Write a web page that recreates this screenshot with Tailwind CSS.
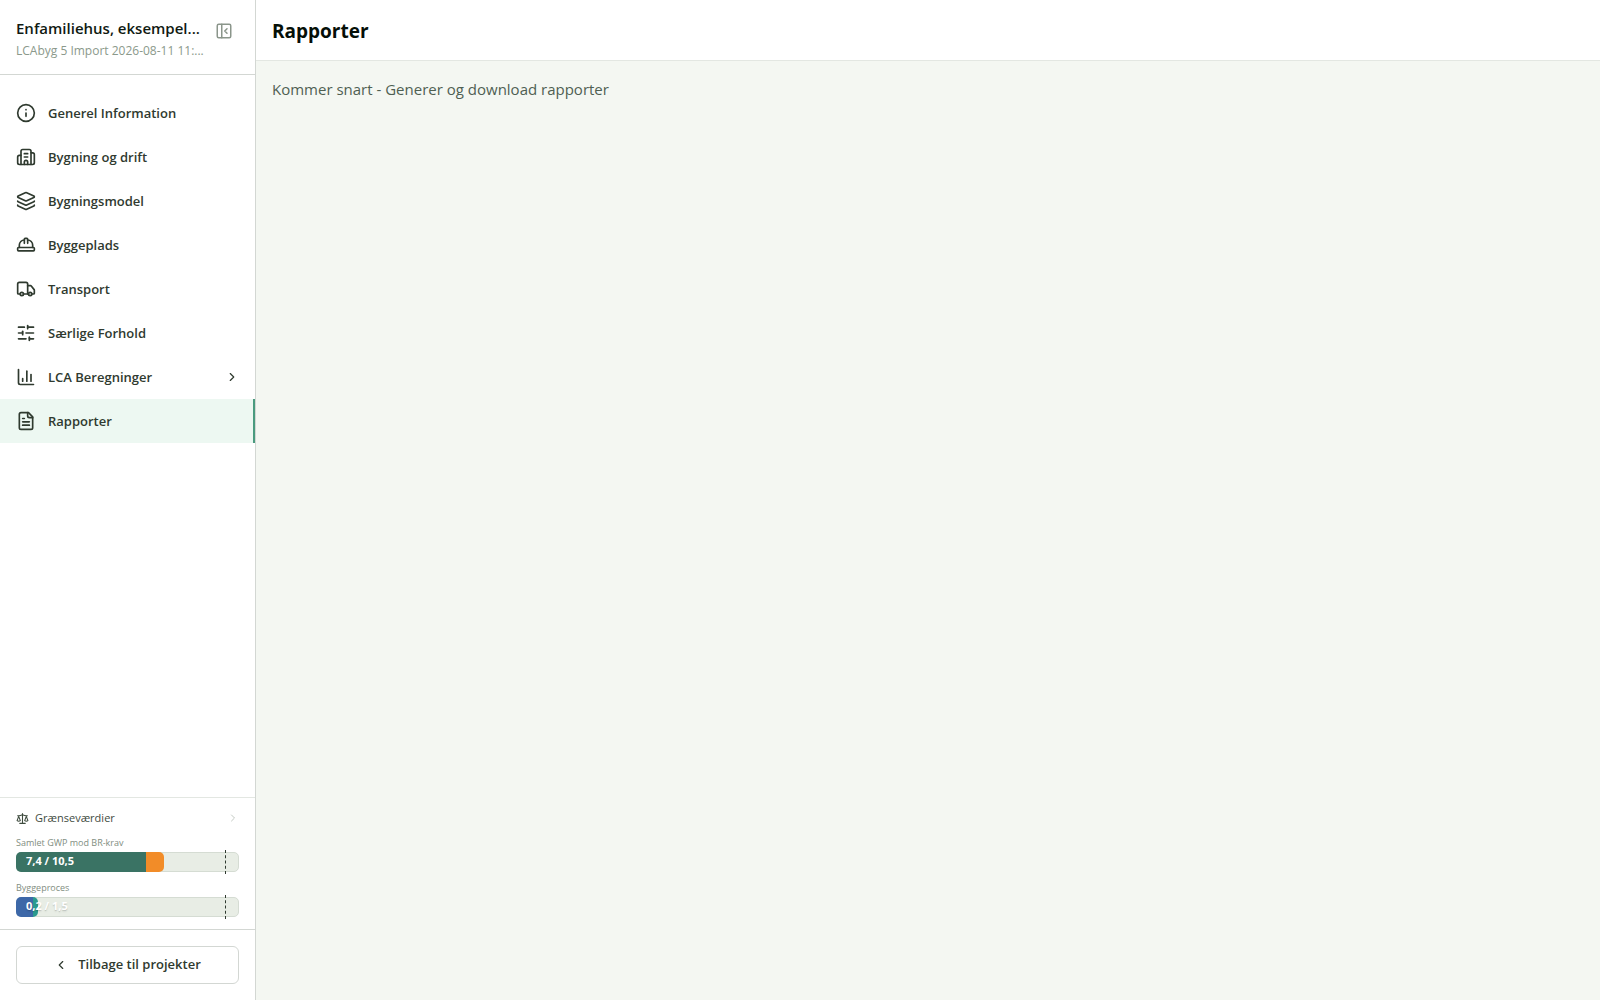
<!DOCTYPE html>
<html lang="da">
<head>
<meta charset="utf-8">
<meta name="viewport" content="width=device-width, initial-scale=1">
<title>Rapporter</title>
<script src="https://cdn.jsdelivr.net/npm/@tailwindcss/browser@4"></script>
</head>
<body class="flex min-h-screen bg-[#f4f7f2] font-['Segoe_UI','Open_Sans','Noto_Sans',sans-serif] text-[#2f3a2f]">
<aside class="flex w-64 shrink-0 flex-col border-r border-[#d3d7d3] bg-white">
  <div class="flex items-start justify-between border-b border-[#d3d7d3] p-4">
    <div class="whitespace-nowrap">
      <h2 class="text-[15px] leading-6 font-semibold text-[#101a12]">Enfamiliehus, eksempel...</h2>
      <p class="h-[18px] text-[12px] leading-[22px] text-[#8b998b]">LCAbyg 5 Import 2026-08-11 11:...</p>
    </div>
    <button type="button" aria-label="Skjul menu" class="flex size-[30px] items-center justify-center text-[#8b968b]">
      <svg class="size-[18px]" viewBox="0 0 24 24" fill="none" stroke="currentColor" stroke-width="2" stroke-linecap="round" stroke-linejoin="round"><rect width="18" height="18" x="3" y="3" rx="2"/><path d="M9 3v18"/><path d="m16 15-3-3 3-3"/></svg>
    </button>
  </div>

  <nav class="flex flex-col py-4 text-[13px] leading-5 font-semibold">
    <a href="#" class="flex h-11 items-center gap-3 px-4">
      <svg class="size-5" viewBox="0 0 24 24" fill="none" stroke="currentColor" stroke-width="2" stroke-linecap="round" stroke-linejoin="round"><circle cx="12" cy="12" r="10"/><path d="M12 16v-4"/><path d="M12 8h.01"/></svg>
      Generel Information</a>
    <a href="#" class="flex h-11 items-center gap-3 px-4">
      <svg class="size-5" viewBox="0 0 24 24" fill="none" stroke="currentColor" stroke-width="2" stroke-linecap="round" stroke-linejoin="round"><path d="M10 12h4"/><path d="M10 8h4"/><path d="M14 21v-3a2 2 0 0 0-4 0v3"/><path d="M6 10H4a2 2 0 0 0-2 2v7a2 2 0 0 0 2 2h16a2 2 0 0 0 2-2V9a2 2 0 0 0-2-2h-2"/><path d="M6 21V5a2 2 0 0 1 2-2h8a2 2 0 0 1 2 2v16"/></svg>
      Bygning og drift</a>
    <a href="#" class="flex h-11 items-center gap-3 px-4">
      <svg class="size-5" viewBox="0 0 24 24" fill="none" stroke="currentColor" stroke-width="2" stroke-linecap="round" stroke-linejoin="round"><path d="M12.83 2.18a2 2 0 0 0-1.66 0L2.6 6.08a1 1 0 0 0 0 1.83l8.58 3.91a2 2 0 0 0 1.66 0l8.58-3.9a1 1 0 0 0 0-1.83z"/><path d="M2 12a1 1 0 0 0 .58.91l8.6 3.91a2 2 0 0 0 1.65 0l8.58-3.9A1 1 0 0 0 22 12"/><path d="M2 17a1 1 0 0 0 .58.91l8.6 3.91a2 2 0 0 0 1.65 0l8.58-3.9A1 1 0 0 0 22 17"/></svg>
      Bygningsmodel</a>
    <a href="#" class="flex h-11 items-center gap-3 px-4">
      <svg class="size-5" viewBox="0 0 24 24" fill="none" stroke="currentColor" stroke-width="2" stroke-linecap="round" stroke-linejoin="round"><path d="M10 10V5a1 1 0 0 1 1-1h2a1 1 0 0 1 1 1v5"/><path d="M14 6a6 6 0 0 1 6 6v3"/><path d="M4 15v-3a6 6 0 0 1 6-6"/><rect x="2" y="15" width="20" height="4" rx="1"/></svg>
      Byggeplads</a>
    <a href="#" class="flex h-11 items-center gap-3 px-4">
      <svg class="size-5" viewBox="0 0 24 24" fill="none" stroke="currentColor" stroke-width="2" stroke-linecap="round" stroke-linejoin="round"><path d="M14 18V6a2 2 0 0 0-2-2H4a2 2 0 0 0-2 2v11a1 1 0 0 0 1 1h2"/><path d="M15 18H9"/><path d="M19 18h2a1 1 0 0 0 1-1v-3.65a1 1 0 0 0-.22-.624l-3.48-4.35A1 1 0 0 0 17.52 8H14"/><circle cx="17" cy="18" r="2"/><circle cx="7" cy="18" r="2"/></svg>
      Transport</a>
    <a href="#" class="flex h-11 items-center gap-3 px-4">
      <svg class="size-5" viewBox="0 0 24 24" fill="none" stroke="currentColor" stroke-width="2" stroke-linecap="round" stroke-linejoin="round"><path d="M10 5H3"/><path d="M12 19H3"/><path d="M14 3v4"/><path d="M16 17v4"/><path d="M21 12h-9"/><path d="M21 19h-5"/><path d="M21 5h-7"/><path d="M8 10v4"/><path d="M8 12H3"/></svg>
      Særlige Forhold</a>
    <a href="#" class="flex h-11 items-center gap-3 px-4">
      <svg class="size-5" viewBox="0 0 24 24" fill="none" stroke="currentColor" stroke-width="2" stroke-linecap="round" stroke-linejoin="round"><path d="M3 3v16a2 2 0 0 0 2 2h16"/><path d="M18 17V9"/><path d="M13 17V5"/><path d="M8 17v-3"/></svg>
      <span class="flex-1">LCA Beregninger</span>
      <svg class="size-[14px]" viewBox="0 0 24 24" fill="none" stroke="currentColor" stroke-width="2" stroke-linecap="round" stroke-linejoin="round"><path d="m9 18 6-6-6-6"/></svg></a>
    <a href="#" aria-current="page" class="flex h-11 items-center gap-3 border-r-2 border-[#4a9b7f] bg-[#edf8f2] px-4">
      <svg class="size-5" viewBox="0 0 24 24" fill="none" stroke="currentColor" stroke-width="2" stroke-linecap="round" stroke-linejoin="round"><path d="M15 2H6a2 2 0 0 0-2 2v16a2 2 0 0 0 2 2h12a2 2 0 0 0 2-2V7Z"/><path d="M14 2v4a2 2 0 0 0 2 2h4"/><path d="M10 9H8"/><path d="M16 13H8"/><path d="M16 17H8"/></svg>
      Rapporter</a>
  </nav>

  <section class="mt-auto border-t border-[#e3e7e2] px-4 pt-[11px] pb-3">
    <button type="button" class="flex h-[18px] w-full items-center gap-[6px] text-[11px] text-[#3f4c3f]">
      <svg class="size-[13px]" viewBox="0 0 24 24" fill="none" stroke="currentColor" stroke-width="2" stroke-linecap="round" stroke-linejoin="round"><path d="m16 16 3-8 3 8c-.87.65-1.92 1-3 1s-2.13-.35-3-1Z"/><path d="m2 16 3-8 3 8c-.87.65-1.92 1-3 1s-2.13-.35-3-1Z"/><path d="M7 21h10"/><path d="M12 3v18"/><path d="M3 7h2c2 0 5-1 7-2 2 1 5 2 7 2h2"/></svg>
      <span class="flex-1 text-left">Grænseværdier</span>
      <svg class="size-3 text-[#c3cac3]" viewBox="0 0 24 24" fill="none" stroke="currentColor" stroke-width="2" stroke-linecap="round" stroke-linejoin="round"><path d="m9 18 6-6-6-6"/></svg>
    </button>
    <p class="mt-2 text-[9px] leading-4 text-[#7f8e7f]">Samlet GWP mod BR-krav</p>
    <div class="relative mt-px flex h-5 rounded-[5px] border border-[#d5dcd3] bg-[#e8ede5]">
      <div class="-my-px -ml-px flex overflow-hidden rounded-[5px]" style="width:67%">
        <div class="bg-[#3a7364]" style="width:87.9%"></div>
        <div class="flex-1 bg-[#f28c28]"></div>
      </div>
      <span class="absolute inset-y-0 left-[9px] text-[11px] leading-4 font-bold text-white">7,4 / 10,5</span>
      <span class="absolute -top-[3px] -bottom-[3px] border-l border-dashed border-[#2f3a2f]" style="left:94%"></span>
    </div>
    <p class="mt-2 text-[9px] leading-4 text-[#7f8e7f]">Byggeproces</p>
    <div class="relative mt-px flex h-5 rounded-[5px] border border-[#d5dcd3] bg-[#e8ede5]">
      <div class="-my-px -ml-px flex overflow-hidden rounded-[5px]" style="width:10%">
        <div class="bg-[#3d68a8]" style="width:77%"></div>
        <div class="flex-1 bg-[#2a9a8f]"></div>
      </div>
      <span class="absolute inset-y-0 left-[9px] text-[11px] leading-4 font-bold text-white text-shadow-sm">0,2 / 1,5</span>
      <span class="absolute -top-[3px] -bottom-[3px] border-l border-dashed border-[#2f3a2f]" style="left:94%"></span>
    </div>
  </section>

  <div class="border-t border-[#d3d7d3] p-4">
    <button type="button" class="flex h-[38px] w-full items-center justify-center gap-[10px] rounded-md border border-[#d3d7d3] bg-white text-[13px] font-semibold">
      <svg class="size-[14px]" viewBox="0 0 24 24" fill="none" stroke="currentColor" stroke-width="2" stroke-linecap="round" stroke-linejoin="round"><path d="m15 18-6-6 6-6"/></svg>
      Tilbage til projekter
    </button>
  </div>
</aside>

<main class="min-w-0 flex-1">
  <header class="flex h-[61px] items-center border-b border-[#e3e7e2] bg-white px-4 pt-0.5">
    <h1 class="text-[19px] leading-7 font-bold text-[#050f07]">Rapporter</h1>
  </header>
  <p class="p-4 text-[15px] leading-6 text-[#4f5f52]">Kommer snart - Generer og download rapporter</p>
</main>
</body>
</html>
